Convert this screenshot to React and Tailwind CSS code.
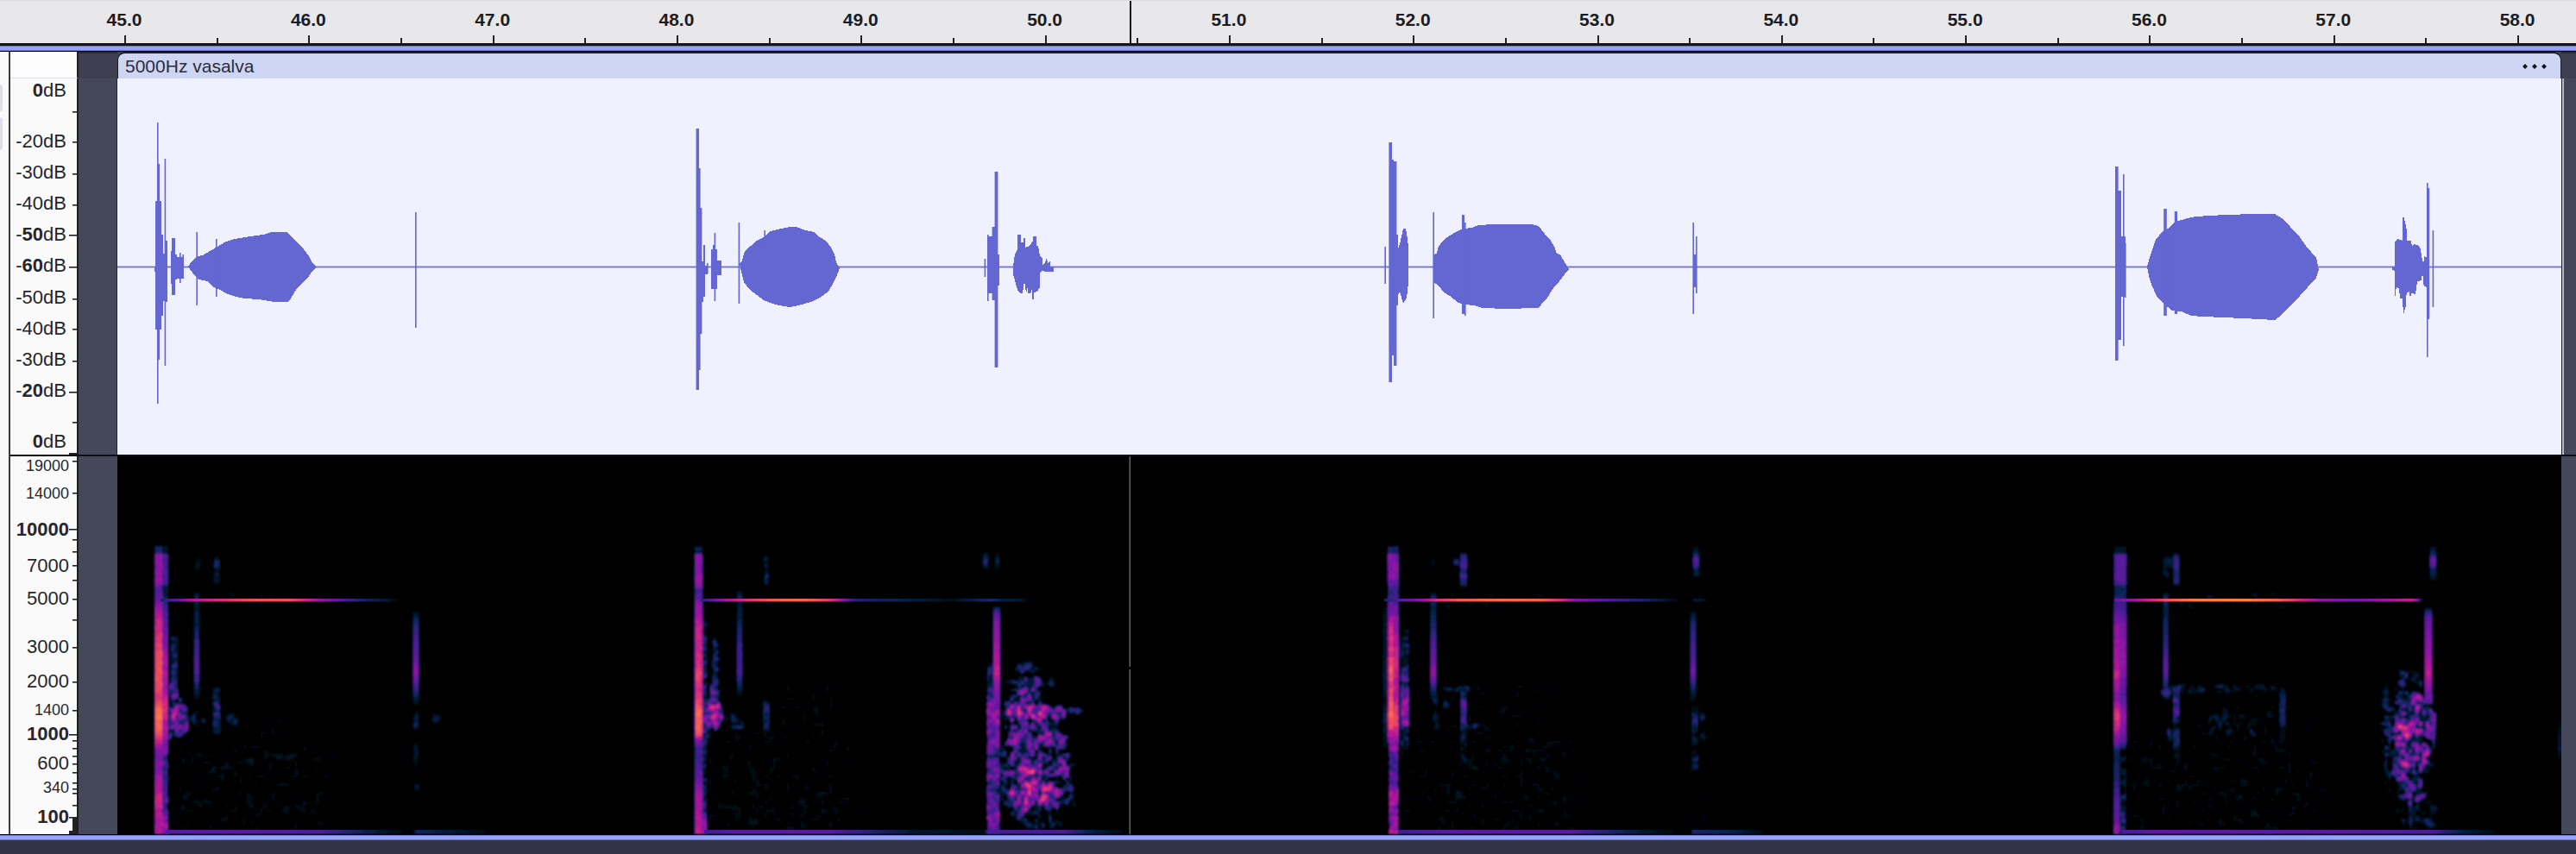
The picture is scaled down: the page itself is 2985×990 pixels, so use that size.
import React from "react";

/* ---------- time ruler ---------- */

const SECONDS = ["45.0", "46.0", "47.0", "48.0", "49.0", "50.0", "51.0", "52.0", "53.0", "54.0", "55.0", "56.0", "57.0"];

function Mark({ label }) {
  return (
    <div className="flex flex-col items-start">
      <span className="-ml-8 w-16 text-center text-[21px] leading-[46px] font-bold h-[41px]">{label}</span>
      <span className="h-[9px] w-[2px] bg-[#222226]" />
    </div>
  );
}

function TimeRuler() {
  return (
    <header className="relative flex h-[50px] border-t border-[#dcdcde] bg-[#e8e8ea] pl-[144px] text-[#1c1c22]">
      {SECONDS.map((s) => (
        <div key={s} className="flex flex-1 items-end">
          <div className="w-1/2">
            <Mark label={s} />
          </div>
          <span className="h-[6px] w-[2px] bg-[#222226]" />
        </div>
      ))}
      <div className="flex w-[68px] items-end">
        <Mark label="58.0" />
      </div>
      <span className="absolute inset-y-0 left-[43.84%] w-[2px] bg-[#161618]" />
    </header>
  );
}

function FocusLine() {
  return <div className="h-[6px] border-y border-[#6f78c0] bg-[#95a3fb]" />;
}

/* ---------- vertical scales ---------- */

const DB_ROWS = [
  ["-", "20", false],
  ["-", "30", false],
  ["-", "40", false],
  ["-", "50", true],
  ["-", "60", true],
  ["-", "50", false],
  ["-", "40", false],
  ["-", "30", false],
  ["-", "20", true],
];

function Db({ sign = "", value, bold }) {
  return (
    <>
      {sign}
      <span className={bold ? "font-bold" : "font-normal"}>{value}</span>dB
    </>
  );
}

const DB_TICKS = [
  [129, 0], [164, 0], [201, 0], [237, 0], [272, 1], [309, 1], [346, 0], [381, 0], [418, 0], [454, 1], [489, 0],
];

function DbScale() {
  return (
    <div className="flex h-full w-[79px] border-r-2 border-[#1d1d22] bg-[#fafafa]">
      <div className="flex flex-1 flex-col pb-px pr-[3px] text-right text-[22px] text-[#26262c]">
        <div className="h-7 leading-7"><Db value="0" bold /></div>
        <div className="flex flex-1 flex-col py-[27px]">
          {DB_ROWS.map(([sign, value, bold], i) => (
            <div key={i} className="flex flex-1 items-center justify-end leading-5">
              <span><Db sign={sign} value={value} bold={bold} /></span>
            </div>
          ))}
        </div>
        <div className="h-7 leading-7"><Db value="0" bold /></div>
      </div>
      <svg className="h-full w-[9px]" viewBox="80 91 9 436" preserveAspectRatio="none" fill="#222226" aria-hidden="true">
        {DB_TICKS.map(([y, long]) => (
          <rect key={y} x={long ? 80 : 84} y={y} width="9" height="1.6" />
        ))}
        <rect x="80" y="525" width="9" height="2" />
      </svg>
    </div>
  );
}

const HZ_ROWS = [
  ["19000", "mt-px text-[18px]"],
  ["14000", "mt-3 text-[18px]"],
  ["10000", "mt-[22px] text-[22px] font-bold"],
  ["7000", "mt-[22px] text-[22px]"],
  ["5000", "mt-[18px] text-[22px]"],
  ["3000", "mt-9 text-[22px]"],
  ["2000", "mt-5 text-[22px]"],
  ["1400", "mt-[13px] text-[18px]"],
  ["1000", "mt-2 text-[22px] font-bold"],
  ["600", "mt-[14px] text-[22px]"],
  ["340", "mt-2 text-[18px]"],
  ["100", "mt-[14px] text-[22px] font-bold"],
];

const HZ_TICKS = [
  [534, 0], [571, 0], [613, 1], [625, 0], [639, 0], [655, 0], [672, 0], [694, 0], [718, 0], [750, 0], [790, 0],
  [823, 0], [851, 1], [858, 0], [867, 0], [876, 0], [885, 0], [895, 0], [907, 0], [914, 0], [919, 0], [933, 0], [947, 1],
];

function HzScale() {
  return (
    <div className="flex h-full w-[79px] border-r-2 border-[#1d1d22] bg-[#fafafa]">
      <div className="flex-1 text-right text-[#26262c]">
        {HZ_ROWS.map(([label, cls]) => (
          <div key={label} className="flow-root">
            <div className={"h-5 " + cls + " leading-5"}>{label}</div>
          </div>
        ))}
      </div>
      <svg className="h-full w-[9px]" viewBox="80 529 9 438" preserveAspectRatio="none" fill="#222226" aria-hidden="true">
        {HZ_TICKS.map(([y, long]) => (
          <rect key={y} x={long ? 80 : 84} y={y} width="9" height="1.6" />
        ))}
        <rect x="84" y="948" width="5" height="19" />
        <rect x="80" y="963" width="9" height="4" />
      </svg>
    </div>
  );
}

/* ---------- waveform ---------- */

// x0, x1, top, bottom
const BARS = [
  [179, 181, 309, 315], [180, 187, 233, 382], [182, 185, 190, 417], [182, 183.6, 142, 468], [187, 189, 272, 366],
  [189, 194, 294, 349], [190.6, 192.2, 184, 424], [192, 194, 279, 350],
  [198, 200, 291, 329], [199, 203, 276, 342], [203, 205, 295, 324], [205, 213, 298, 323], [208, 209.6, 293, 328], [211.4, 213, 295, 318],
  [227.4, 229, 269, 354], [250, 251.6, 277, 344], [481, 482.6, 246, 380],
  [806.6, 810, 149, 452], [807, 811.6, 195, 429], [807, 813.4, 241, 387], [807, 815, 303, 350], [815, 817, 284, 344],
  [817, 820, 308, 318], [819, 820.6, 305, 317], [824, 831, 289, 335], [826, 829, 284, 335], [827.6, 829.2, 270, 349], [831, 836, 302, 319],
  [855.6, 857.2, 258, 352], [885.4, 887, 267, 290],
  [1140.6, 1142.2, 300, 321], [1144, 1145.6, 272, 349], [1144, 1150, 274, 340], [1149.6, 1153, 263, 348], [1152.6, 1156.4, 199, 426], [1156, 1158, 295, 331],
  [1604.4, 1606, 286, 329], [1609.4, 1613, 165, 443], [1613, 1615, 185, 412], [1615, 1618.4, 187, 424], [1618, 1620, 272, 354],
  [1660.4, 1662, 246, 369], [1694, 1697, 249, 364], [1697, 1698.6, 258, 366],
  [1961.4, 1963, 258, 364], [1962, 1966, 295, 333], [1965, 1966.6, 274, 340],
  [2451, 2454.6, 193, 418], [2454, 2458, 221, 394], [2458, 2463, 274, 344], [2460, 2461.6, 202, 401], [2462, 2463.6, 282, 345],
  [2507.2, 2510.8, 242, 366], [2519.8, 2523, 245, 364],
  [2812, 2813.6, 212, 414], [2813, 2815.2, 218, 370], [2818.6, 2820.2, 267, 356],
];

const BODIES = [
  "218,309 222,303 228,297 235,296 245,290 252,286 262,280 272,277 290,274 305,272 315,269 333,269 338,275 345,281 352,289 358,297 362,305 367,310 362,314 358,320 350,328 343,336 337,346 333,350 318,350 300,347 283,346 270,343 262,340 255,336 248,333 240,326 230,324 225,319",
  "857,306 860,302 863,291 870,285 877,279 885,275 893,268 905,265 915,263 923,263 933,267 943,269 950,275 957,279 963,287 967,295 969,304 973,311 969,321 965,329 960,338 950,345 940,350 925,354 915,356 908,355 895,352 885,348 877,342 868,335 862,327 859,315",
  "1174,309 1176,295 1179,289 1179,272 1183,272 1183,281 1186,281 1186,276 1188,276 1188,287 1193,285 1197,279 1197,274 1201,274 1201,285 1203,285 1205,297 1208,299 1208,307 1211,305 1213,298 1214,305 1217,302 1217,309 1221,310 1221,315 1212,315 1207,314 1205,317 1205,333 1202,338 1198,339 1198,347 1196,347 1196,335 1194,340 1191,340 1191,332 1189,340 1187,325 1185,340 1182,340 1179,336 1176,325 1174,318",
  "1620,289 1622,283 1624,274 1626,265 1629,265 1630,270 1632,286 1632,328 1630,345 1626,352 1624,345 1622,338 1620,342",
  "1661,295 1665,294 1666,288 1670,281 1677,275 1687,269 1695,265 1706,264 1713,261 1730,260 1775,260 1783,262 1790,271 1797,279 1801,286 1804,294 1808,295 1813,304 1818,312 1813,318 1807,326 1800,334 1793,345 1786,353 1782,357 1745,358 1718,357 1708,354 1698,353 1690,351 1680,343 1673,339 1667,331 1661,327",
  "2488,309 2490,302 2494,289 2498,278 2507,267 2512,265 2521,257 2535,253 2544,251 2562,250 2578,249 2613,248 2636,248 2644,253 2654,263 2665,275 2672,285 2684,299 2687,313 2684,322 2665,343 2644,365 2636,371 2600,369 2553,367 2539,366 2528,361 2517,360 2507,352 2499,343 2494,332 2490,320",
  "2772,310 2775,310 2775,281 2778,277 2784,279 2784,252 2785.6,252 2788.6,265 2788.6,279 2794,279 2795,286 2797,283 2801,284 2804,286 2806,295 2807,303 2808.6,303 2808.6,297 2812,298 2812,333 2808.6,331 2807,315 2806,325 2801,326 2799,341 2794,340 2793,347 2792,338 2788.6,340 2788,354 2785,365 2784,346 2781,346 2780,334 2776.6,333 2776,343 2775,343 2775,314 2772,313",
];

function Waveform() {
  return (
    <svg
      className="block h-full w-full bg-[#eff1ff]"
      viewBox="136 91 2832 436"
      preserveAspectRatio="none"
      fill="#6466d2"
      role="img"
      aria-label="Waveform"
    >
      <rect x="136" y="308.6" width="2832" height="1.8" fill="#6f71d8" />
      {BODIES.map((points, i) => (
        <polygon key={i} points={points} shapeRendering="crispEdges" />
      ))}
      {BARS.map(([x0, x1, y0, y1], i) => (
        <rect key={i} x={x0} y={y0} width={x1 - x0} height={y1 - y0} />
      ))}
    </svg>
  );
}

/* ---------- spectrogram ---------- */

const X0 = 136;
const Y0 = 529;
const CELL = 2;
const COLS = 1416;
const ROWS = 219;

const STOPS = [
  [0, 0, 0, 0], [0.12, 0, 18, 30], [0.22, 3, 34, 74], [0.32, 30, 36, 110], [0.42, 72, 30, 150], [0.55, 120, 20, 165],
  [0.66, 170, 20, 155], [0.76, 212, 40, 125], [0.86, 238, 76, 92], [0.95, 252, 112, 72], [1, 255, 135, 60],
];

function heat(v) {
  const t = Math.max(0, Math.min(1, v));
  let i = 1;
  while (i < STOPS.length - 1 && STOPS[i][0] < t) i++;
  const a = STOPS[i - 1];
  const b = STOPS[i];
  const k = (t - a[0]) / (b[0] - a[0]);
  const c = [1, 2, 3].map((j) => Math.round(a[j] + (b[j] - a[j]) * k));
  return `rgb(${c[0]},${c[1]},${c[2]})`;
}

function hash(x, y) {
  let h = (Math.imul(x, 374761393) + Math.imul(y, 668265263)) | 0;
  h = Math.imul(h ^ (h >>> 13), 1274126177);
  return ((h ^ (h >>> 16)) >>> 0) / 4294967295;
}

function noise(x, y, s) {
  const fx = x / s;
  const fy = y / s;
  const ix = Math.floor(fx);
  const iy = Math.floor(fy);
  const u = fx - ix;
  const w = fy - iy;
  const top = hash(ix, iy) * (1 - u) + hash(ix + 1, iy) * u;
  const bot = hash(ix, iy + 1) * (1 - u) + hash(ix + 1, iy + 1) * u;
  return top * (1 - w) + bot * w;
}

function along(profile, p) {
  if (p <= profile[0][0] || p >= profile[profile.length - 1][0]) return 0;
  let i = 1;
  while (profile[i][0] < p) i++;
  const [p0, v0] = profile[i - 1];
  const [p1, v1] = profile[i];
  return v0 + ((v1 - v0) * (p - p0)) / (p1 - p0 || 1);
}

// vertical strands: centre x, width, grain, [y, level] profile
const STRIPS = [
  [184, 7, 0.08, [[632, 0.1], [634, 0.3], [641, 0.32], [643, 0.64], [676, 0.64], [682, 0.5], [690, 0.52], [710, 0.72], [740, 0.84], [770, 0.9], [790, 0.9], [810, 0.84], [828, 1], [845, 0.96], [862, 0.75], [870, 0.58], [890, 0.62], [910, 0.7], [925, 0.78], [950, 0.72], [968, 0.72]]],
  [191, 6, 0.12, [[632, 0.05], [634, 0.2], [641, 0.2], [643, 0.5], [676, 0.5], [680, 0.25], [690, 0.25], [700, 0.46], [740, 0.6], [770, 0.7], [800, 0.7], [820, 0.82], [850, 0.7], [865, 0.62], [875, 0.6]]],
  [190, 8, 0.4, [[862, 0.5], [880, 0.62], [920, 0.6], [945, 0.66], [955, 0.8], [968, 0.85]]],
  [202, 6, 0.35, [[736, 0.2], [740, 0.42], [770, 0.42], [800, 0.5], [812, 0.55]]],
  [228, 4, 0.06, [[686, 0.12], [694, 0.32], [702, 0.2], [725, 0.26], [745, 0.42], [775, 0.5], [788, 0.44], [800, 0.25], [812, 0.1]]],
  [229, 3, 0.15, [[646, 0.1], [650, 0.2], [658, 0.2], [664, 0.05]]],
  [251, 5, 0.15, [[645, 0.1], [652, 0.36], [657, 0.3], [661, 0.1], [666, 0.26], [675, 0.24], [678, 0.05]]],
  [251, 7, 0.35, [[794, 0.2], [800, 0.38], [815, 0.5], [840, 0.48], [852, 0.2]]],
  [482, 5, 0.02, [[709, 0.1], [720, 0.32], [740, 0.45], [765, 0.52], [778, 0.64], [790, 0.52], [805, 0.3], [818, 0.05]]],
  [482, 4, 0.15, [[824, 0.1], [832, 0.32], [842, 0.32], [848, 0.05]]],
  [482, 4, 0.2, [[860, 0.1], [868, 0.26], [880, 0.24], [895, 0.05]]],
  [483, 3, 0.05, [[908, 0.1], [912, 0.22], [917, 0.05]]],

  [809.5, 7, 0.08, [[632, 0.05], [636, 0.3], [641, 0.2], [643, 0.64], [656, 0.6], [672, 0.7], [680, 0.64], [684, 0.42], [692, 0.5], [700, 0.62], [720, 0.74], [770, 0.82], [780, 0.88], [800, 0.82], [815, 0.88], [828, 1], [842, 0.96], [852, 0.88], [858, 0.62], [868, 0.46], [880, 0.44], [900, 0.54], [920, 0.68], [968, 0.76]]],
  [816, 5, 0.45, [[700, 0.2], [740, 0.42], [790, 0.5], [840, 0.58], [860, 0.5], [900, 0.42], [935, 0.5], [968, 0.8]]],
  [829, 6, 0.42, [[737, 0.2], [745, 0.42], [780, 0.42], [800, 0.5], [815, 0.5]]],
  [857, 4, 0.04, [[685, 0.1], [692, 0.3], [700, 0.2], [715, 0.22], [735, 0.34], [755, 0.42], [778, 0.46], [790, 0.34], [803, 0.15], [808, 0.05]]],
  [888, 4, 0.25, [[644, 0.1], [648, 0.32], [655, 0.26], [665, 0.32], [675, 0.32], [680, 0.05]]],
  [888, 6, 0.3, [[808, 0.1], [816, 0.4], [830, 0.44], [842, 0.4], [858, 0.15]]],
  [1142, 4, 0.05, [[641, 0.1], [650, 0.38], [655, 0.3], [660, 0.05]]],
  [1155.5, 3, 0.1, [[641, 0.1], [650, 0.28], [662, 0.05]]],
  [1155, 6, 0.02, [[702, 0.12], [710, 0.45], [722, 0.6], [745, 0.64], [765, 0.7], [780, 0.74], [792, 0.62], [808, 0.56], [822, 0.5]]],
  [1148, 7, 0.36, [[768, 0.2], [775, 0.4], [800, 0.48], [815, 0.52]]],
  [1151, 13, 0.4, [[800, 0.5], [815, 0.66], [826, 0.84], [838, 0.74], [860, 0.72], [870, 0.6], [878, 0.46], [890, 0.66], [900, 0.64], [912, 0.52], [925, 0.64], [945, 0.68], [968, 0.64]]],

  [1614.5, 11, 0.14, [[632, 0.05], [635, 0.38], [641, 0.3], [643, 0.64], [665, 0.64], [677, 0.55], [682, 0.46], [695, 0.48], [710, 0.62], [735, 0.72], [770, 0.8], [785, 0.8], [800, 0.74], [815, 0.78], [825, 0.92], [840, 0.9], [850, 0.76], [862, 0.6]]],
  [1612, 5, 0.12, [[700, 0.5], [728, 0.82], [760, 0.86], [778, 0.96], [800, 0.88], [825, 1], [842, 0.95], [850, 0.7]]],
  [1615, 9, 0.34, [[855, 0.6], [870, 0.7], [890, 0.52], [910, 0.72], [930, 0.78], [945, 0.68], [955, 0.78], [968, 0.88]]],
  [1605, 3, 0.05, [[705, 0.1], [730, 0.2], [752, 0.15], [770, 0.22], [800, 0.22], [812, 0.12], [828, 0.28], [845, 0.22], [868, 0.08]]],
  [1628, 8, 0.42, [[728, 0.2], [740, 0.36], [760, 0.42], [785, 0.52], [800, 0.62], [814, 0.74], [824, 0.84], [838, 0.78], [844, 0.46], [860, 0.4], [876, 0.3]]],
  [1661, 4.5, 0.02, [[687, 0.1], [693, 0.32], [705, 0.2], [720, 0.28], [745, 0.44], [765, 0.52], [779, 0.62], [790, 0.5], [802, 0.24], [812, 0.1]]],
  [1664, 5, 0.3, [[805, 0.3], [815, 0.34], [822, 0.15], [832, 0.36], [845, 0.3]]],
  [1661, 2, 0.1, [[645, 0.1], [650, 0.16], [660, 0.05]]],
  [1696, 6, 0.06, [[640, 0.15], [645, 0.4], [657, 0.48], [661, 0.3], [668, 0.46], [677, 0.32], [681, 0.05]]],
  [1696, 6, 0.3, [[794, 0.35], [808, 0.42], [818, 0.62], [830, 0.5], [844, 0.44], [850, 0.3], [885, 0.22], [892, 0.1]]],
  [1962, 4.5, 0.02, [[708, 0.1], [722, 0.34], [745, 0.42], [765, 0.48], [778, 0.58], [790, 0.42], [802, 0.24], [814, 0.05]]],
  [1965.5, 5, 0.04, [[633, 0.05], [637, 0.16], [641, 0.25], [648, 0.5], [656, 0.45], [661, 0.2], [666, 0.22], [670, 0.05]]],
  [1964, 6, 0.36, [[818, 0.2], [832, 0.42], [842, 0.42], [852, 0.3], [862, 0.36], [868, 0.1], [880, 0.34], [892, 0.36], [898, 0.1]]],
  [1973, 4, 0.3, [[824, 0.1], [832, 0.34], [840, 0.2], [855, 0.3], [866, 0.1]]],

  [2457, 12, 0.06, [[632, 0.05], [635, 0.18], [641, 0.15], [643, 0.48], [675, 0.5], [681, 0.28], [690, 0.3], [700, 0.42], [730, 0.6], [765, 0.64], [785, 0.58], [805, 0.48], [812, 0.5], [820, 0.6], [830, 0.66], [845, 0.6], [860, 0.48], [870, 0.2]]],
  [2453, 5, 0.06, [[700, 0.42], [730, 0.64], [765, 0.68], [780, 0.76], [795, 0.68], [810, 0.6], [828, 0.84], [845, 0.76], [862, 0.55], [870, 0.3], [880, 0.28], [900, 0.34], [920, 0.44], [950, 0.52], [968, 0.7]]],
  [2460, 6, 0.4, [[865, 0.3], [890, 0.28], [930, 0.4], [968, 0.5]]],
  [2509.5, 4, 0.03, [[687, 0.1], [694, 0.36], [706, 0.2], [730, 0.32], [755, 0.42], [776, 0.52], [786, 0.44], [800, 0.26], [812, 0.1]]],
  [2510, 5, 0.3, [[642, 0.1], [648, 0.28], [656, 0.26], [680, 0.15]]],
  [2522, 5, 0.08, [[640, 0.1], [646, 0.4], [656, 0.46], [664, 0.34], [675, 0.4], [680, 0.05]]],
  [2522, 6, 0.28, [[794, 0.34], [806, 0.46], [818, 0.56], [830, 0.46], [840, 0.24], [850, 0.48], [862, 0.4], [880, 0.15]]],
  [2645, 5, 0.14, [[797, 0.1], [806, 0.3], [818, 0.36], [835, 0.36], [845, 0.18], [864, 0.12]]],
  [2814, 6, 0.02, [[704, 0.12], [712, 0.42], [722, 0.54], [745, 0.6], [765, 0.66], [780, 0.74], [792, 0.64], [805, 0.54], [815, 0.5]]],
  [2819.5, 5, 0.02, [[633, 0.05], [637, 0.2], [641, 0.25], [648, 0.54], [655, 0.5], [660, 0.25], [666, 0.24], [673, 0.05]]],
  [2967, 3, 0.05, [[835, 0.05], [855, 0.22], [870, 0.25], [880, 0.05]]],
];

// grainy clouds: centre x, centre y, radius x, radius y, level, grain
const CLOUDS = [
  [204, 828, 14, 26, 0.82, 0.6], [202, 806, 8, 24, 0.66, 0.55], [211, 840, 9, 15, 0.74, 0.5], [198, 836, 10, 22, 0.7, 0.5], [505, 832, 5, 6, 0.32, 0.2],
  [230, 835, 10, 12, 0.36, 0.4], [268, 836, 10, 8, 0.28, 0.3],
  [828, 826, 12, 24, 0.88, 0.6], [820, 834, 12, 22, 0.66, 0.5], [828, 806, 8, 20, 0.6, 0.5], [852, 836, 14, 12, 0.4, 0.42], [855, 843, 10, 3, 0.4, 0.2],
  [1190, 774, 16, 8, 0.42, 0.35], [1192, 791, 28, 8, 0.56, 0.42], [1218, 791, 5, 6, 0.32, 0.1], [1190, 810, 20, 24, 0.66, 0.55],
  [1188, 870, 26, 86, 0.7, 0.62], [1206, 880, 38, 74, 0.56, 0.6],
  [1178, 826, 22, 14, 0.84, 0.55], [1203, 826, 22, 12, 0.92, 0.5], [1222, 827, 16, 12, 0.78, 0.5], [1242, 824, 16, 5, 0.42, 0.3],
  [1182, 858, 20, 24, 0.74, 0.6], [1214, 856, 26, 20, 0.74, 0.6],
  [1194, 894, 32, 26, 0.84, 0.62], [1230, 892, 16, 20, 0.72, 0.6], [1192, 893, 18, 10, 0.92, 0.45],
  [1184, 924, 24, 22, 0.84, 0.58], [1196, 914, 14, 16, 0.88, 0.45], [1214, 922, 22, 20, 0.84, 0.58], [1186, 938, 20, 18, 0.56, 0.5], [1235, 918, 14, 26, 0.4, 0.45], [1166, 896, 14, 40, 0.42, 0.45], [1205, 950, 30, 16, 0.34, 0.42],
  [1687, 652, 5, 5, 0.42, 0.15], [1676, 817, 4, 5, 0.3, 0.1], [1690, 798, 26, 5, 0.32, 0.35], [1705, 842, 22, 4, 0.36, 0.35],
  [2515, 652, 7, 7, 0.24, 0.1], [2530, 798, 30, 7, 0.44, 0.38], [2570, 798, 32, 6, 0.34, 0.38], [2620, 798, 26, 5, 0.24, 0.3], [2510, 804, 8, 8, 0.4, 0.3],
  [2513, 850, 8, 10, 0.36, 0.4], [2576, 842, 34, 24, 0.26, 0.42], [2612, 846, 20, 10, 0.26, 0.4],
  [2786, 788, 8, 16, 0.46, 0.45], [2800, 792, 22, 16, 0.34, 0.42], [2796, 852, 25, 66, 0.68, 0.62], [2794, 818, 24, 22, 0.74, 0.6], [2800, 846, 22, 50, 0.74, 0.6], [2785, 845, 14, 40, 0.9, 0.58],
  [2784, 890, 15, 24, 0.8, 0.55], [2806, 872, 14, 30, 0.74, 0.58], [2797, 918, 18, 24, 0.62, 0.56], [2770, 850, 12, 70, 0.4, 0.45],
  [2800, 945, 30, 26, 0.32, 0.42], [2815, 835, 9, 50, 0.6, 0.52],
];

// sparse background specks: x0, x1, y0, y1, level
const SPECKS = [
  [196, 390, 865, 962, 0.34], [250, 350, 830, 880, 0.16], [475, 510, 830, 880, 0.2], [818, 1000, 850, 962, 0.28], [890, 990, 795, 860, 0.2],
  [1625, 1840, 860, 960, 0.28], [1670, 1810, 795, 890, 0.24], [2465, 2700, 860, 962, 0.3], [2540, 2690, 820, 890, 0.26],
  [850, 960, 688, 702, 0.24], [1668, 1800, 688, 702, 0.3], [2505, 2660, 688, 702, 0.34], [220, 350, 688, 702, 0.24], [1955, 1980, 920, 965, 0.36],
];

function buildLayers() {
  const field = new Float32Array(COLS * ROWS);
  const paint = (x0, x1, y0, y1, fn) => {
    const c0 = Math.max(0, Math.floor((x0 - X0) / CELL));
    const c1 = Math.min(COLS - 1, Math.ceil((x1 - X0) / CELL));
    const r0 = Math.max(0, Math.floor((y0 - Y0) / CELL));
    const r1 = Math.min(ROWS - 1, Math.ceil((y1 - Y0) / CELL));
    for (let r = r0; r <= r1; r++) {
      for (let c = c0; c <= c1; c++) {
        const x = X0 + c * CELL + 1;
        const y = Y0 + r * CELL + 1;
        const v = fn(x, y);
        const k = r * COLS + c;
        if (v > field[k]) field[k] = v;
      }
    }
  };
  STRIPS.forEach(([cx, w, grain, prof]) => {
    const h = w / 2;
    paint(cx - h - 3, cx + h + 3, prof[0][0], prof[prof.length - 1][0], (x, y) => {
      const edge = Math.max(0, Math.min(1, (h + 2.4 - Math.abs(x - cx)) / 2.6));
      return along(prof, y) * edge - grain * noise(x, y, 4);
    });
  });
  // the rim of a cloud is roughened so that it breaks up into grains
  CLOUDS.forEach(([cx, cy, rx, ry, v, grain]) => {
    paint(cx - rx, cx + rx, cy - ry, cy + ry, (x, y) => {
      const rough = (noise(x + 5, y + 9, 6) - 0.5) * 0.7;
      const d = ((x - cx) / rx) ** 2 + ((y - cy) / ry) ** 2 + rough;
      const n = noise(x + 31, y + 17, 4);
      const holes = n * n * (3 - 2 * n);
      return d >= 1 ? 0 : v * Math.min(1, (1 - d) ** 0.6 * 1.05) - grain * holes;
    });
  });
  SPECKS.forEach(([x0, x1, y0, y1, v]) => {
    paint(x0, x1, y0, y1, (x, y) => {
      const edge = Math.min(1, (x - x0 + 6) / 20, (x1 - x + 6) / 40);
      return Math.max(0, noise(x + 7, y, 5) - 0.7) * v * 1.7 * Math.max(0, edge);
    });
  });

  const LEVELS = 32;
  const paths = Array.from({ length: LEVELS + 1 }, () => []);
  for (let r = 0; r < ROWS; r++) {
    let c = 0;
    while (c < COLS) {
      const q = Math.min(LEVELS, Math.round(field[r * COLS + c] * LEVELS));
      let e = c + 1;
      while (e < COLS && Math.min(LEVELS, Math.round(field[r * COLS + e] * LEVELS)) === q) e++;
      if (q > 0) paths[q].push(`M${X0 + c * CELL} ${Y0 + r * CELL}h${(e - c) * CELL}v${CELL}h${(c - e) * CELL}z`);
      c = e;
    }
  }
  return paths.map((p, i) => ({ d: p.join(""), fill: heat(i / LEVELS) })).filter((p) => p.d);
}

const LAYERS = buildLayers();

// horizontal tones: y, height, [x, level] profile
const TONES = [
  [694, 3.4, [[186, 0.3], [205, 0.48], [222, 0.68], [258, 0.78], [290, 0.87], [335, 0.87], [352, 0.76], [370, 0.63], [400, 0.42], [425, 0.26], [450, 0.15], [462, 0]]],
  [694, 3.4, [[812, 0.32], [830, 0.55], [857, 0.74], [885, 0.86], [910, 0.92], [940, 0.9], [962, 0.8], [978, 0.58], [990, 0.34], [1020, 0.26], [1060, 0.2], [1105, 0.08], [1118, 0.18], [1148, 0.32], [1160, 0.2], [1182, 0.16], [1190, 0.03], [1250, 0]]],
  [694, 3.4, [[1604, 0.3], [1625, 0.46], [1650, 0.62], [1666, 0.78], [1690, 0.88], [1740, 0.93], [1785, 0.91], [1805, 0.8], [1825, 0.58], [1860, 0.46], [1900, 0.32], [1925, 0.18], [1948, 0]]],
  [694, 3.4, [[1960, 0], [1963, 0.14], [1972, 0.14], [1980, 0]]],
  [694, 3.4, [[2450, 0.5], [2470, 0.6], [2490, 0.74], [2510, 0.86], [2540, 0.96], [2600, 0.98], [2640, 0.9], [2665, 0.76], [2690, 0.6], [2730, 0.54], [2765, 0.64], [2795, 0.72], [2802, 0.5], [2808, 0]]],
  [962, 4.6, [[192, 0.46], [280, 0.46], [370, 0.44], [410, 0.3], [445, 0.14], [475, 0]]],
  [962, 4.6, [[478, 0], [483, 0.26], [520, 0.18], [575, 0]]],
  [962, 4.6, [[816, 0.4], [850, 0.47], [960, 0.47], [1000, 0.36], [1060, 0.16], [1140, 0.08], [1145, 0.42], [1235, 0.42], [1262, 0.22], [1310, 0]]],
  [962, 4.6, [[1620, 0.4], [1680, 0.47], [1820, 0.47], [1870, 0.3], [1910, 0.14], [1950, 0]]],
  [962, 4.6, [[1959, 0], [1962, 0.32], [1976, 0.28], [2010, 0.22], [2050, 0]]],
  [962, 4.6, [[2458, 0.42], [2500, 0.48], [2700, 0.46], [2818, 0.44], [2850, 0.22], [2900, 0]]],
];

function Tone({ id, y, height, profile }) {
  const start = profile[0][0];
  const end = profile[profile.length - 1][0];
  return (
    <>
      <linearGradient id={id} gradientUnits="userSpaceOnUse" x1={start} x2={end} y1="0" y2="0">
        {profile.map(([x, v]) => (
          <stop key={x} offset={(x - start) / (end - start)} stopColor={heat(v)} />
        ))}
      </linearGradient>
      <rect x={start} y={y} width={end - start} height={height} fill={`url(#${id})`} />
    </>
  );
}

function Spectrogram() {
  return (
    <svg
      className="block h-full w-full bg-black"
      viewBox="136 529 2832 438"
      preserveAspectRatio="none"
      role="img"
      aria-label="Spectrogram"
    >
      <filter id="soft" filterUnits="userSpaceOnUse" x="136" y="529" width="2832" height="438">
        <feGaussianBlur stdDeviation="0.9" />
      </filter>
      <filter id="line" filterUnits="userSpaceOnUse" x="136" y="529" width="2832" height="438">
        <feGaussianBlur stdDeviation="0.6" />
      </filter>
      <g filter="url(#soft)" shapeRendering="crispEdges">
        {LAYERS.map((p) => (
          <path key={p.fill} d={p.d} fill={p.fill} />
        ))}
      </g>
      <g filter="url(#line)">
        {TONES.map(([y, height, profile], i) => (
          <Tone key={i} id={`tone${i}`} y={y} height={height} profile={profile} />
        ))}
      </g>
      <rect x="1308.6" y="529" width="1.4" height="438" fill="#6a6a6a" />
      <rect x="1308" y="773" width="3" height="3" fill="#000" />
    </svg>
  );
}

/* ---------- track ---------- */

export default function App() {
  return (
    <div
      className="min-h-screen w-full overflow-hidden bg-[#323445]"
      style={{ fontFamily: '"Liberation Sans", Arial, sans-serif' }}
    >
      <TimeRuler />
      <div className="h-[3px] bg-[#14141a]" />
      <FocusLine />
      <main className="flex border-t border-black">
        <aside className="flex w-3 flex-col gap-[7px] border-r-2 border-[#3a3a3e] bg-[#fafafa] pt-[38px]">
          <span className="h-[31px] w-[3px] rounded-r bg-[#dedfe8]" />
          <span className="h-[38px] w-[3px] rounded-r bg-[#dedfe8]" />
        </aside>
        <section className="min-w-0 flex-1">
          <div className="flex h-[31px] bg-[#3f3f52]">
            <div className="w-[79px] border-r-2 border-b border-r-[#1d1d22] border-b-[#dfe0e8] bg-[#fcfcfc]" />
            <div className="w-[45px] border-t-2 border-[#2a2a36]" />
            <div className="flex min-w-0 flex-1 items-center justify-between rounded-t-[9px] border-x border-t-2 border-[#1d1d24] bg-[#cfd6f3] pl-2 pr-[14px]">
              <h1 className="text-[21px] leading-[26px] text-[#2c2c3a]">5000Hz vasalva</h1>
              <button type="button" aria-label="Clip menu" className="flex h-6 w-[32px] items-center justify-center">
                <svg width="28" height="6" viewBox="0 0 28 6" fill="#15151c" aria-hidden="true">
                  <path d="M3 0l3 3-3 3-3-3zM14 0l3 3-3 3-3-3zM25 0l3 3-3 3-3-3z" />
                </svg>
              </button>
            </div>
            <div className="w-[17px] border-t-2 border-[#2a2a36]" />
          </div>
          <div className="flex h-[436px] bg-[#45485b]">
            <DbScale />
            <div className="w-[45px] border-r border-[#26262e]" />
            <div className="min-w-0 flex-1">
              <Waveform />
            </div>
            <div className="w-[17px] border-l border-[#1d1d24]">
              <div className="h-full w-[2px] bg-[#b9bac8]" />
            </div>
          </div>
          <div className="h-[2px] bg-[#0e0e12]" />
          <div className="flex h-[438px] bg-[#45485b]">
            <HzScale />
            <div className="w-[45px]" />
            <div className="min-w-0 flex-1">
              <Spectrogram />
            </div>
            <div className="w-[17px]" />
          </div>
        </section>
      </main>
      <div className="h-px bg-black" />
      <FocusLine />
    </div>
  );
}
